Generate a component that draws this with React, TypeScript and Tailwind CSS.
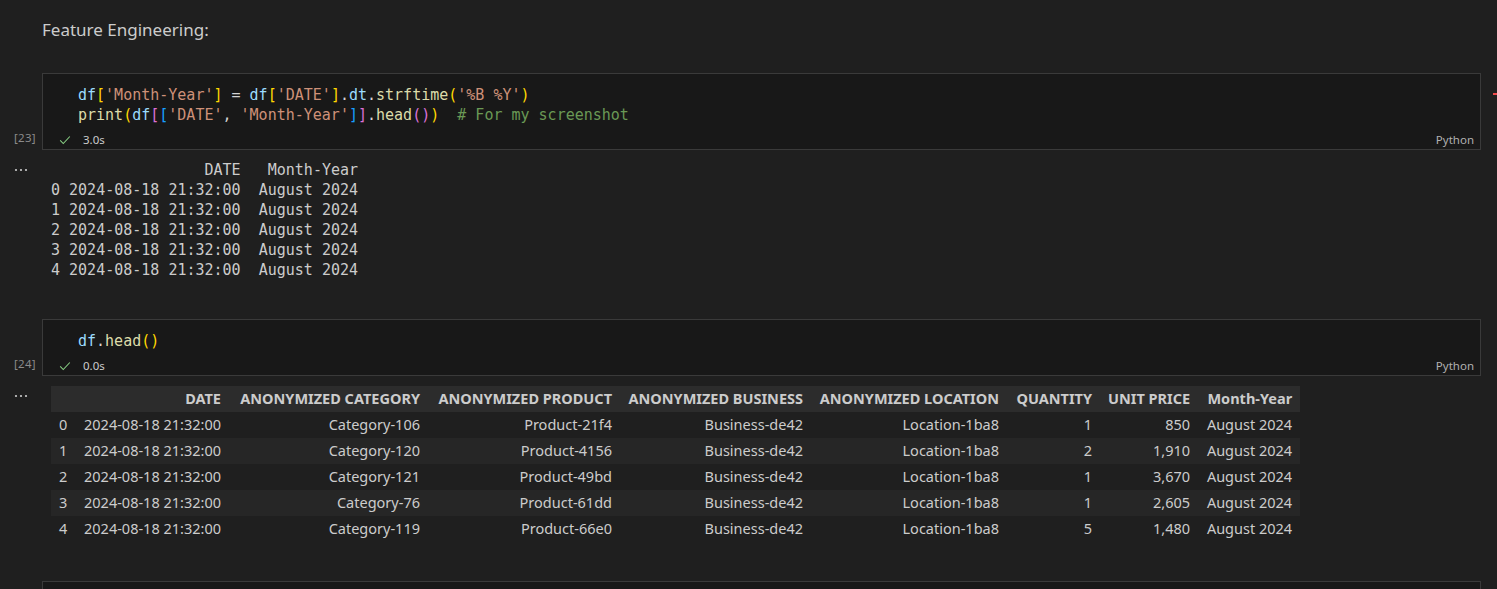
import React from 'react'

const mono = { fontFamily: '"DejaVu Sans Mono", monospace' }
const sans = { fontFamily: '"Noto Sans", sans-serif' }

// bracket colours per nesting level
const B1 = 'text-[#ffd700]'
const B2 = 'text-[#da70d6]'
const B3 = 'text-[#179fff]'
const V = 'text-[#9cdcfe]'
const S = 'text-[#ce9178]'
const F = 'text-[#dcdcaa]'
const P = 'text-[#d4d4d4]'

function Check() {
  return (
    <svg width="14" height="14" viewBox="0 0 16 16" fill="none">
      <path d="M2.5 8.5 L6 12 L13.5 4" stroke="#89d185" strokeWidth="1.2" />
    </svg>
  )
}

function Dots() {
  return (
    <svg width="14" height="4" viewBox="0 0 14 4" fill="#cccccc">
      <circle cx="2" cy="2" r="1.1" />
      <circle cx="7" cy="2" r="1.1" />
      <circle cx="12" cy="2" r="1.1" />
    </svg>
  )
}

function CodeCell({ count, time, children }: { count: number; time: string; children: React.ReactNode }) {
  return (
    <div className="flex">
      <div className="w-[42px] shrink-0 flex flex-col justify-end pb-[2px]">
        <span className="text-[11.5px] tracking-[0.3px] text-[#8b8b8b] pl-[14px] leading-[20px]" style={sans}>[{count}]</span>
      </div>
      <div className="flex-1 mr-[16px] border border-[#3a3a3a] bg-[#181818]">
        <div className="pt-[11px] pl-[35px] text-[15px] leading-[20px] whitespace-pre" style={mono}>
          {children}
        </div>
        <div className="mt-[5px] h-[19px] flex items-center pl-[15px] pr-[6px] text-[11.5px] text-[#cccccc]" style={sans}>
          <Check />
          <span className="ml-[11px]">{time}</span>
          <span className="ml-auto text-[#b0b0b0]">Python</span>
        </div>
      </div>
    </div>
  )
}

const rows = [
  ['0', '2024-08-18 21:32:00', 'Category-106', 'Product-21f4', 'Business-de42', 'Location-1ba8', '1', '850', 'August 2024'],
  ['1', '2024-08-18 21:32:00', 'Category-120', 'Product-4156', 'Business-de42', 'Location-1ba8', '2', '1,910', 'August 2024'],
  ['2', '2024-08-18 21:32:00', 'Category-121', 'Product-49bd', 'Business-de42', 'Location-1ba8', '1', '3,670', 'August 2024'],
  ['3', '2024-08-18 21:32:00', 'Category-76', 'Product-61dd', 'Business-de42', 'Location-1ba8', '1', '2,605', 'August 2024'],
  ['4', '2024-08-18 21:32:00', 'Category-119', 'Product-66e0', 'Business-de42', 'Location-1ba8', '5', '1,480', 'August 2024'],
]

const headers = ['', 'DATE', 'ANONYMIZED CATEGORY', 'ANONYMIZED PRODUCT', 'ANONYMIZED BUSINESS', 'ANONYMIZED LOCATION', 'QUANTITY', 'UNIT PRICE', 'Month-Year']
const widths = ['w-[25px]', 'w-[153px]', 'w-[199px]', 'w-[192px]', 'w-[191px]', 'w-[196px]', 'w-[93px]', 'w-[97px]', 'w-[102px]']

export default function App() {
  return (
    <div className="relative min-h-[589px] bg-[#1f1f1f] text-[#cccccc] overflow-hidden">
      {/* overview ruler mark */}
      <div className="absolute right-0 top-[93px] w-[4px] h-[2px] bg-[#f14c4c]" />

      <div className="pt-[18px] pl-[42px] h-[73px]">
        <h2 className="text-[17px] leading-[24px] text-[#cccccc]" style={sans}>Feature Engineering:</h2>
      </div>

      <CodeCell count={23} time="3.0s">
        <div>
          <span className={V}>df</span><span className={B1}>[</span><span className={S}>'Month-Year'</span><span className={B1}>]</span>
          <span className={P}> = </span>
          <span className={V}>df</span><span className={B1}>[</span><span className={S}>'DATE'</span><span className={B1}>]</span>
          <span className={P}>.</span><span className={V}>dt</span><span className={P}>.</span><span className={F}>strftime</span>
          <span className={B1}>(</span><span className={S}>'%B %Y'</span><span className={B1}>)</span>
        </div>
        <div>
          <span className={F}>print</span><span className={B1}>(</span><span className={V}>df</span><span className={B2}>[</span><span className={B3}>[</span>
          <span className={S}>'DATE'</span><span className={P}>, </span><span className={S}>'Month-Year'</span>
          <span className={B3}>]</span><span className={B2}>]</span><span className={P}>.</span><span className={F}>head</span>
          <span className={B2}>()</span><span className={B1}>)</span>
          <span className="text-[#6a9955]">  # For my screenshot</span>
        </div>
      </CodeCell>

      {/* output 1 */}
      <div className="flex pt-[10px] h-[169px]">
        <div className="w-[42px] shrink-0 pl-[14px] pt-[8px]"><Dots /></div>
        <pre className="pl-[9px] text-[15px] leading-[20px] text-[#cccccc]" style={mono}>
{`                 DATE   Month-Year
0 2024-08-18 21:32:00  August 2024
1 2024-08-18 21:32:00  August 2024
2 2024-08-18 21:32:00  August 2024
3 2024-08-18 21:32:00  August 2024
4 2024-08-18 21:32:00  August 2024`}
        </pre>
      </div>

      <CodeCell count={24} time="0.0s">
        <div>
          <span className={V}>df</span><span className={P}>.</span><span className={F}>head</span><span className={B1}>()</span>
        </div>
      </CodeCell>

      {/* output 2 */}
      <div className="flex pt-[10px] h-[205px]">
        <div className="w-[42px] shrink-0 pl-[14px] pt-[8px]"><Dots /></div>
        <div className="pl-[9px]">
          <table className="table-fixed border-collapse text-[14.5px] text-[#cccccc]" style={sans}>
            <thead>
              <tr className="bg-[#2c2c2c] h-[26px]">
                {headers.map((h, i) => (
                  <th key={i} className={`${widths[i]} px-[8px] text-right font-bold whitespace-nowrap`}>{h}</th>
                ))}
              </tr>
            </thead>
            <tbody>
              {rows.map((r, ri) => (
                <tr key={ri} className={`h-[26px] ${ri % 2 === 1 ? 'bg-[#262626]' : ''}`}>
                  {r.map((c, ci) => (
                    <td key={ci} className={`px-[8px] whitespace-nowrap ${ci === 0 ? 'text-left' : 'text-right'}`}>{c}</td>
                  ))}
                </tr>
              ))}
            </tbody>
          </table>
        </div>
      </div>

      {/* next cell, cut off */}
      <div className="ml-[42px] mr-[16px] h-[40px] border border-[#3a3a3a] bg-[#181818]" />
    </div>
  )
}
